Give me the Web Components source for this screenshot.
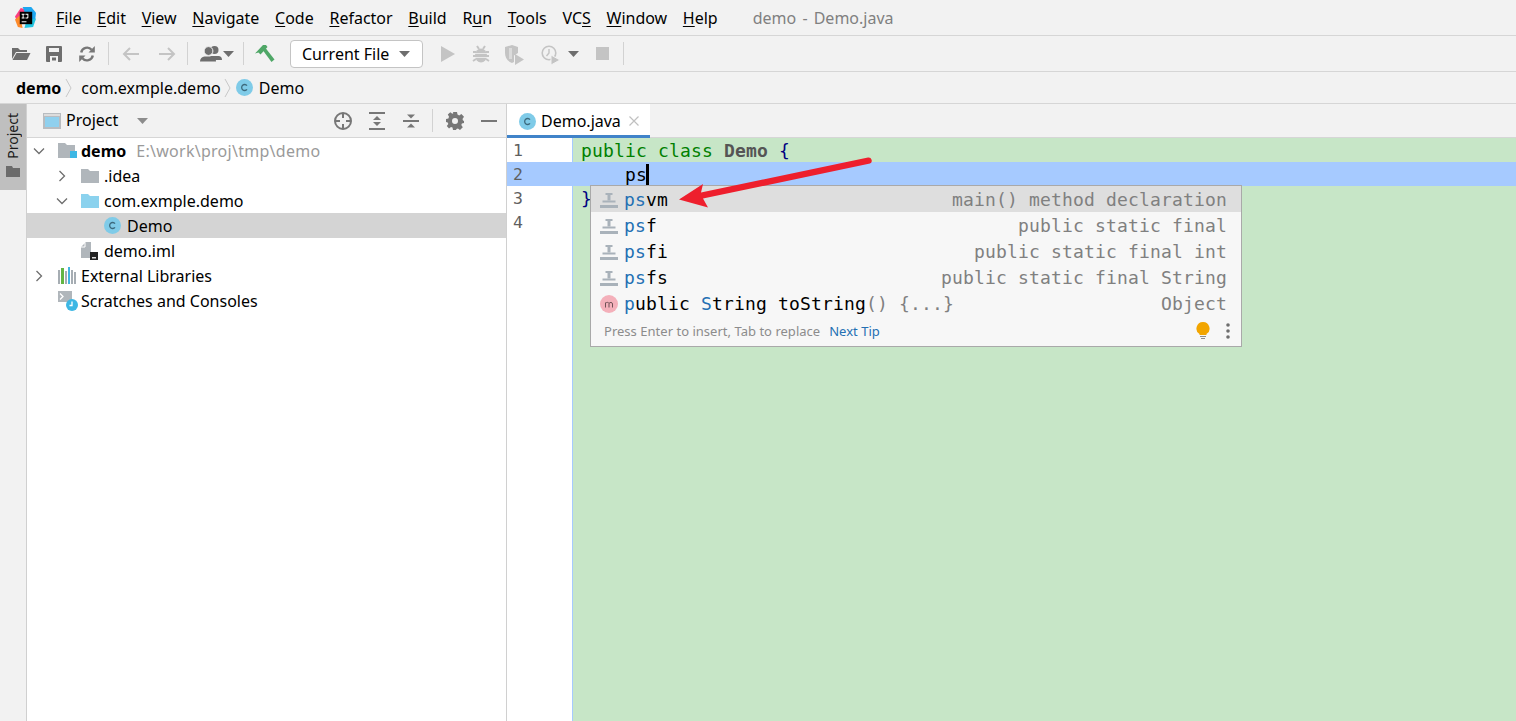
<!DOCTYPE html>
<html lang="en">

<head>
	<meta charset="UTF-8">
	<title>demo - Demo.java</title>
	<style>
		html, body { margin: 0; height: 100%; overflow: hidden; background: #fff; }
		body { font-family: "Noto Sans", "Open Sans", sans-serif; font-size: 16px; color: #000; }
	</style>
</head>

<body>
	<ij-app></ij-app>

	<script>
		// all icons in one place, each one drawn for its own box
		const ICONS = {
			logo: `<svg width="21" height="21" viewBox="0 0 22 22">
				<path d="M0 10 L6 1 L13 3 L9 15 L3 17 Z" fill="#fc3f80"/>
				<path d="M8 0 L17 0 L22 6 L21 15 L12 10 Z" fill="#1ea7f0"/>
				<path d="M0 13 L5 9 L8 22 L3 21 Z" fill="#fd8a2a"/>
				<path d="M12 14 L22 12 L19 21 L10 22 Z" fill="#22c4e0"/>
				<rect x="5" y="5" width="13" height="13" fill="#000"/>
				<path d="M7 7h3v1H9v3h1v1H7v-1h1V8H7zM11 7h3v4c0 1-.6 1-1.5 1H11v-1h1.5c.4 0 .5-.1.5-.4V8h-2z" fill="#fff"/>
				<rect x="7" y="15" width="5" height="1" fill="#fff"/>
			</svg>`,
			open: `<svg width="20" height="16" viewBox="0 0 20 16"><path d="M1 2h6l2 2h7v2H5L1 13z" fill="#6e6e6e"/><path d="M5.500 7H19.500L16 14H1.500z" fill="#6e6e6e"/></svg>`,
			save: `<svg width="16" height="16" viewBox="0 0 16 16"><path fill-rule="evenodd" d="M1 0h14a1 1 0 0 1 1 1v14a1 1 0 0 1-1 1H1a1 1 0 0 1-1-1V1a1 1 0 0 1 1-1zM3 2v4h10V2zM4 10v6h8v-6z" fill="#6e6e6e"/><rect x="6" y="11.500" width="4" height="3" fill="#6e6e6e"/></svg>`,
			sync: `<svg width="18" height="18" viewBox="0 0 18 18" fill="none"><path d="M3.200 7.500A6 6 0 0 1 13.600 4.700" stroke="#777" stroke-width="2.400"/><path d="M10.500 7.400h6.300V1z" fill="#777"/><path d="M14.800 10.500A6 6 0 0 1 4.400 13.300" stroke="#777" stroke-width="2.400"/><path d="M7.500 10.600H1.200V17z" fill="#777"/></svg>`,
			back: `<svg width="18" height="14" viewBox="0 0 18 14" fill="none" stroke="#c4c4c4" stroke-width="2"><path d="M17 7H2M8 1L2 7l6 6"/></svg>`,
			forward: `<svg width="18" height="14" viewBox="0 0 18 14" fill="none" stroke="#c4c4c4" stroke-width="2"><path d="M1 7h15M10 1l6 6-6 6"/></svg>`,
			person: `<svg width="22" height="18" viewBox="0 0 22 18"><circle cx="14.500" cy="5" r="4" fill="#6e6e6e"/><path d="M10 11h9c2 .6 3 1.700 3 4h-8z" fill="#6e6e6e"/><circle cx="8.500" cy="6" r="4.400" fill="#6e6e6e" stroke="#f2f2f2"/><path d="M0 16.500c0-3 2-4.400 4.500-5h8c2.500.6 3.500 2 3.500 5z" fill="#6e6e6e"/></svg>`,
			caret: `<svg width="11" height="6" viewBox="0 0 11 6"><path d="M0 0h11L5.500 6z" fill="#6e6e6e"/></svg>`,
			hammer: `<svg width="20" height="18" viewBox="0 0 20 18"><path d="M0 8.500L8 0h3l1.500 2-7 7.500-2-2z" fill="#4fa767"/><path d="M8 5.500L10.500 3 19.500 14.500 16.500 17z" fill="#4fa767"/></svg>`,
			run: `<svg width="14" height="16" viewBox="0 0 14 16"><path d="M0 0l14 8-14 8z" fill="#c4c4c4"/></svg>`,
			debug: `<svg width="18" height="18" viewBox="0 0 18 18"><g stroke="#c4c4c4" stroke-width="2" fill="none"><path d="M5 1l2 3M13 1l-2 3M1 7h3M17 7h-3M1 11h3M17 11h-3M1 16l3-2M17 16l-3-2"/></g><ellipse cx="9" cy="10.500" rx="6" ry="7" fill="#c4c4c4"/><path d="M3 8.500h12M3 12.500h12" stroke="#f2f2f2" stroke-width=".8"/></svg>`,
			coverage: `<svg width="20" height="20" viewBox="0 0 20 20"><path d="M0 2l7-2 6 2v6l-4 2.500V17l-2 1C2 16 0 12 0 8z" fill="#c4c4c4"/><path d="M4 3h3v11H4z" fill="#f2f2f2" opacity=".5"/><path d="M10 9l9 5.500-9 5.500z" fill="#c4c4c4"/></svg>`,
			profile: `<svg width="20" height="20" viewBox="0 0 20 20"><circle cx="8" cy="8" r="6.800" fill="none" stroke="#c4c4c4" stroke-width="1.600"/><path d="M8 4v4l-2.500 3" fill="none" stroke="#c4c4c4" stroke-width="1.400"/><path d="M10 10l9 5-9 5z" fill="#c4c4c4" stroke="#f2f2f2"/></svg>`,
			stop: `<svg width="13" height="13" viewBox="0 0 13 13"><rect width="13" height="13" fill="#c4c4c4"/></svg>`,
			crumb: `<svg width="7" height="20" viewBox="0 0 7 20" fill="none" stroke="#c8c8c8"><path d="M1 1l5 9-5 9"/></svg>`,
			cls: `<svg width="17" height="17" viewBox="0 0 17 17"><circle cx="8.500" cy="8.500" r="8.500" fill="#7fcbe8"/><path d="M11 6.600A3 3 0 1 0 11 10.400" fill="none" stroke="#3d6a7d" stroke-width="1.300"/></svg>`,
			panel: `<svg width="18" height="16" viewBox="0 0 18 16"><rect width="18" height="16" fill="#b8bcc0"/><rect x="1" y="1" width="16" height="2" fill="#dcdcdc"/><rect x="2" y="4" width="14" height="10" fill="#8fd0ee"/></svg>`,
			down: `<svg width="11" height="6" viewBox="0 0 11 6"><path d="M0 0h11L5.500 6z" fill="#8c8c8c"/></svg>`,
			target: `<svg width="20" height="20" viewBox="0 0 20 20" fill="none" stroke="#777" stroke-width="2"><circle cx="10" cy="10" r="8"/><path d="M10 2v5M10 13v5M2 10h5M13 10h5"/></svg>`,
			expand: `<svg width="16" height="18" viewBox="0 0 16 18"><path d="M0 0h16v2H0zM0 16h16v2H0z" fill="#777"/><path d="M8 4l4 4H4zM8 14l4-4H4z" fill="#777"/></svg>`,
			collapse: `<svg width="16" height="18" viewBox="0 0 16 18"><path d="M0 8h16v2H0z" fill="#777"/><path d="M8 6.500l-4-4h8zM8 11.500l4 4H4z" fill="#777"/></svg>`,
			gear: `<svg width="18" height="18" viewBox="0 0 18 18"><path fill="#777" fill-rule="evenodd" d="M7 0h4l.5 2.600 1.700.8L15.400 2 18 4.800l-1.500 2.100.5 1.500L18 9v2l-2.100.5-.6 1.600 1.500 2.100L14 18l-2.100-1.500-1.400.6L10 18H7l-.5-2.400-1.500-.6L3 16.500.8 14l1.500-2.100-.6-1.500L0 10V7l2.400-.5.6-1.700L1.800 2.500 4.300.3l2 1.400 1-.4zM9 6a3 3 0 1 0 0 6 3 3 0 0 0 0-6z"/></svg>`,
			minimize: `<svg width="16" height="2" viewBox="0 0 16 2"><rect width="16" height="2" fill="#777"/></svg>`,
			chevRight: `<svg width="12" height="12" viewBox="0 0 12 12" fill="none" stroke="#6e6e6e" stroke-width="1.300"><path d="M3.500 1l5 5-5 5"/></svg>`,
			chevDown: `<svg width="12" height="12" viewBox="0 0 12 12" fill="none" stroke="#6e6e6e" stroke-width="1.300"><path d="M1 3.500l5 5 5-5"/></svg>`,
			module: `<svg width="20" height="18" viewBox="0 0 20 18"><path d="M0 1h7l2 2h8v6h-5v7H0z" fill="#b0b6bb"/><rect x="12" y="9" width="7" height="7" fill="#3db7e4"/></svg>`,
			folder: `<svg width="18" height="14" viewBox="0 0 18 14"><path d="M0 0h7l2 2h9v12H0z" fill="#b0b6bb"/></svg>`,
			pkg: `<svg width="18" height="14" viewBox="0 0 18 14"><path d="M0 0h7l2 2h9v12H0z" fill="#8bd2ee"/></svg>`,
			iml: `<svg width="17" height="18" viewBox="0 0 17 18"><path d="M5 0h5v16H0V5z" fill="#b0b6bb"/><path d="M4 1v4H0" fill="none" stroke="#fff"/><rect x="9" y="10" width="8" height="8" fill="#222"/><rect x="11" y="15" width="4" height="1.500" fill="#ddd"/></svg>`,
			libs: `<svg width="18" height="17" viewBox="0 0 18 17"><rect x="0" y="3" width="2" height="14" fill="#a6adb3"/><rect x="3" y="1" width="3" height="16" fill="#62b543"/><rect x="7" y="4" width="2" height="13" fill="#a6adb3"/><rect x="10" y="0" width="2" height="17" fill="#40b6e0"/><rect x="13" y="3" width="2" height="14" fill="#a6adb3"/><rect x="16" y="5" width="2" height="12" fill="#a6adb3"/></svg>`,
			scratches: `<svg width="20" height="20" viewBox="0 0 20 20"><rect x="0" y="0" width="14" height="11" fill="#b0b6bb"/><path d="M2 2.500l3 3-3 3" fill="none" stroke="#fff" stroke-width="1.300"/><circle cx="14" cy="14" r="6" fill="#3db7e4"/><path d="M14 10.500V14.500h-2.500" fill="none" stroke="#fff" stroke-width="1.300"/></svg>`,
			stripeFolder: `<svg width="14" height="11" viewBox="0 0 14 11"><path d="M0 0h6l1 2h7v9H0z" fill="#6b6b6b"/></svg>`,
			close: `<svg width="10" height="10" viewBox="0 0 10 10" fill="none" stroke="#c0c0c0" stroke-width="1.200"><path d="M.5.5l9 9M9.500.5l-9 9"/></svg>`,
			live: `<svg width="18" height="15" viewBox="0 0 18 15"><path d="M5.500 0h7v2h-2v5.500h-3V2h-2z" fill="#a9b2ba"/><rect x="2.500" y="7.500" width="13" height="2" fill="#a9b2ba"/><rect x="0" y="12" width="18" height="3" fill="#a9b2ba"/></svg>`,
			method: `<svg width="18" height="18" viewBox="0 0 18 18"><circle cx="9" cy="9" r="9" fill="#f4b0ba"/><path d="M5.500 12.500V7.500M5.500 8.500c.8-1.500 3.200-1.500 3.500 0v4M9 8.500c.8-1.500 3.500-1.500 3.500.5v3.500" fill="none" stroke="#6f5055" stroke-width="1"/></svg>`,
			bulb: `<svg width="14" height="18" viewBox="0 0 14 18"><path d="M7 0a6.500 6.500 0 0 1 3.500 12v1h-7v-1A6.500 6.500 0 0 1 7 0z" fill="#f2a500"/><rect x="4" y="14" width="6" height="1" fill="#8c8c8c"/><rect x="5" y="16" width="4" height="1" fill="#8c8c8c"/></svg>`,
			dots: `<svg width="4" height="16" viewBox="0 0 4 16"><circle cx="2" cy="2" r="1.800" fill="#6e6e6e"/><circle cx="2" cy="8" r="1.800" fill="#6e6e6e"/><circle cx="2" cy="14" r="1.800" fill="#6e6e6e"/></svg>`
		};

		class IjIcon extends HTMLElement {
			connectedCallback() {
				this.attachShadow({ mode: 'open' });
				this.shadowRoot.innerHTML = `<style>
					:host { display: inline-flex; align-items: center; justify-content: center; flex: none; line-height: 0; }
				</style>${ICONS[this.getAttribute('name')] || ''}`;
			}
		}
		customElements.define('ij-icon', IjIcon);

		// top menu
		class IjMenubar extends HTMLElement {
			connectedCallback() {
				this.attachShadow({ mode: 'open' });
				this.shadowRoot.innerHTML = `<style>
					:host { display: flex; align-items: center; height: 35px; border-bottom: 1px solid #d6d6d6; background: #f2f2f2; padding-left: 15px; }
					.items { display: flex; gap: 15.700px; margin-left: 20px; }
					span { white-space: nowrap; }
					u { text-underline-offset: 2px; }
					.title { margin-left: 35px; color: #808080; word-spacing: 2px; }
				</style>
				<ij-icon name="logo" style="margin-top:-1px"></ij-icon>
				<div class="items">
					<span><u>F</u>ile</span><span><u>E</u>dit</span><span><u>V</u>iew</span><span><u>N</u>avigate</span><span><u>C</u>ode</span><span><u>R</u>efactor</span><span><u>B</u>uild</span><span>R<u>u</u>n</span><span><u>T</u>ools</span><span>VC<u>S</u></span><span><u>W</u>indow</span><span><u>H</u>elp</span>
				</div>
				<span class="title">demo - Demo.java</span>`;
			}
		}
		customElements.define('ij-menubar', IjMenubar);

		class IjToolbar extends HTMLElement {
			connectedCallback() {
				this.attachShadow({ mode: 'open' });
				this.shadowRoot.innerHTML = `<style>
					:host { display: flex; align-items: center; height: 35px; border-bottom: 1px solid #d6d6d6; background: #f2f2f2; padding-left: 11px; }
					.sep { width: 1px; height: 23px; background: #d2d2d2; flex: none; }
					.combo { display: flex; align-items: center; justify-content: space-between; box-sizing: border-box; width: 133px; height: 28px; margin: 0 18px 0 15px; padding: 0 12px 0 11px; background: #fff; border: 1px solid #c4c4c4; border-radius: 4px; }
				</style>
				<ij-icon name="open"></ij-icon>
				<ij-icon name="save" style="margin-left:15px"></ij-icon>
				<ij-icon name="sync" style="margin-left:16px"></ij-icon>
				<div class="sep" style="margin:0 13px 0 12px"></div>
				<ij-icon name="back"></ij-icon>
				<ij-icon name="forward" style="margin-left:18px"></ij-icon>
				<div class="sep" style="margin:0 12px 0 11px"></div>
				<ij-icon name="person"></ij-icon>
				<ij-icon name="caret" style="margin-left:1px"></ij-icon>
				<div class="sep" style="margin:0 11px 0 9px"></div>
				<ij-icon name="hammer"></ij-icon>
				<div class="combo"><span>Current File</span><ij-icon name="caret"></ij-icon></div>
				<ij-icon name="run"></ij-icon>
				<ij-icon name="debug" style="margin-left:17px"></ij-icon>
				<ij-icon name="coverage" style="margin-left:15px;margin-top:2px"></ij-icon>
				<ij-icon name="profile" style="margin-left:16px;margin-top:2px"></ij-icon>
				<ij-icon name="caret" style="margin-left:7px"></ij-icon>
				<ij-icon name="stop" style="margin-left:17px"></ij-icon>
				<div class="sep" style="margin-left:14px"></div>`;
			}
		}
		customElements.define('ij-toolbar', IjToolbar);

		class IjBreadcrumb extends HTMLElement {
			connectedCallback() {
				this.attachShadow({ mode: 'open' });
				this.shadowRoot.innerHTML = `<style>
					:host { display: flex; align-items: center; height: 31px; border-bottom: 1px solid #d6d6d6; background: #f2f2f2; padding-left: 16px; }
					b { font-weight: 700; }
				</style>
				<b>demo</b>
				<ij-icon name="crumb" style="margin:0 9px 0 4px"></ij-icon>
				<span>com.exmple.demo</span>
				<ij-icon name="crumb" style="margin:0 5px 0 3px"></ij-icon>
				<ij-icon name="cls" style="margin-right:6px"></ij-icon>
				<span>Demo</span>`;
			}
		}
		customElements.define('ij-breadcrumb', IjBreadcrumb);

		class IjStripe extends HTMLElement {
			connectedCallback() {
				this.attachShadow({ mode: 'open' });
				this.shadowRoot.innerHTML = `<style>
					:host { display: block; flex: none; width: 26px; background: #f2f2f2; border-right: 1px solid #d0d0d0; }
					.btn { display: flex; flex-direction: column; align-items: center; gap: 7px; height: 86px; padding-top: 9px; box-sizing: border-box; background: #bfbfbf; }
					.label { writing-mode: vertical-rl; transform: rotate(180deg); font-size: 14px; line-height: 14px; color: #1a1a1a; }
				</style>
				<div class="btn"><span class="label">Project</span><ij-icon name="stripeFolder"></ij-icon></div>`;
			}
		}
		customElements.define('ij-stripe', IjStripe);

		// one line of the project tree, indent by level, chevron optional
		class IjTreeRow extends HTMLElement {
			connectedCallback() {
				const level = +this.getAttribute('level') || 0;
				const chev = this.getAttribute('chevron');
				this.attachShadow({ mode: 'open' });
				this.shadowRoot.innerHTML = `<style>
					:host { display: flex; align-items: center; height: 25px; padding-left: ${6 + level * 23}px; white-space: nowrap; }
					:host([selected]) { background: #d4d4d4; }
					.chev { width: 25px; display: flex; flex: none; }
					.icon { width: 23px; display: flex; flex: none; }
				</style>
				<div class="chev">${chev ? `<ij-icon name="${chev}"></ij-icon>` : ''}</div>
				<div class="icon"><ij-icon name="${this.getAttribute('icon')}"></ij-icon></div>
				<div><slot></slot></div>`;
			}
		}
		customElements.define('ij-tree-row', IjTreeRow);

		class IjProject extends HTMLElement {
			connectedCallback() {
				this.attachShadow({ mode: 'open' });
				this.shadowRoot.innerHTML = `<style>
					:host { display: flex; flex-direction: column; flex: none; width: 479px; border-right: 1px solid #d0d0d0; background: #fff; }
					header { display: flex; align-items: center; height: 33px; border-bottom: 1px solid #d6d6d6; background: #f2f2f2; padding-left: 16px; }
					.sep { width: 1px; height: 23px; background: #d2d2d2; }
					.name { margin: -2px 0 0 5px; }
					.tools { display: flex; align-items: center; margin-left: auto; padding-right: 9px; }
				</style>
				<header>
					<ij-icon name="panel"></ij-icon>
					<span class="name">Project</span>
					<ij-icon name="down" style="margin-left:19px"></ij-icon>
					<div class="tools">
						<ij-icon name="target"></ij-icon>
						<ij-icon name="expand" style="margin-left:16px"></ij-icon>
						<ij-icon name="collapse" style="margin-left:18px"></ij-icon>
						<div class="sep" style="margin:0 13px"></div>
						<ij-icon name="gear"></ij-icon>
						<ij-icon name="minimize" style="margin-left:17px"></ij-icon>
					</div>
				</header>
				<slot></slot>`;
			}
		}
		customElements.define('ij-project', IjProject);

		// completion popup lies over the editor
		class IjCompletionRow extends HTMLElement {
			connectedCallback() {
				this.attachShadow({ mode: 'open' });
				this.shadowRoot.innerHTML = `<style>
					:host { display: flex; align-items: center; box-sizing: border-box; height: 26px; padding: 2px 14px 0 9px; }
					:host([active]) { background: #dedede; }
					.icon { width: 24px; display: flex; flex: none; }
					.text { flex: none; white-space: pre; }
					.hint { flex: 1; min-width: 0; text-align: right; color: #808080; white-space: pre; }
				</style>
				<div class="icon"><ij-icon name="${this.getAttribute('icon')}"></ij-icon></div>
				<div class="text"><slot></slot></div>
				<div class="hint">${this.getAttribute('hint')}</div>`;
			}
		}
		customElements.define('ij-completion-row', IjCompletionRow);

		class IjCompletion extends HTMLElement {
			connectedCallback() {
				this.attachShadow({ mode: 'open' });
				this.shadowRoot.innerHTML = `<style>
					:host { display: block; position: absolute; left: 83px; top: 47px; width: 652px; box-sizing: border-box; border: 1px solid #a9a9a9; background: #f7f7f7; font: 18px/24px "DejaVu Sans Mono", "Liberation Mono", monospace; letter-spacing: .16px; }
					footer { display: flex; align-items: center; height: 30px; padding: 0 11px 0 13px; font: 13px "Noto Sans", "Open Sans", sans-serif; letter-spacing: .02px; color: #8c8c8c; }
					a { color: #2470b3; margin-left: 9px; }
					.end { display: flex; align-items: center; gap: 16px; margin-left: auto; }
				</style>
				<slot></slot>
				<footer>
					<span>Press Enter to insert, Tab to replace</span><a>Next Tip</a>
					<div class="end"><ij-icon name="bulb"></ij-icon><ij-icon name="dots"></ij-icon></div>
				</footer>`;
			}
		}
		customElements.define('ij-completion', IjCompletion);

		class IjEditor extends HTMLElement {
			connectedCallback() {
				this.attachShadow({ mode: 'open' });
				this.shadowRoot.innerHTML = `<style>
					:host { display: flex; flex-direction: column; flex: 1; min-width: 0; background: #fff; }
					.tabs { display: flex; height: 34px; box-sizing: border-box; background: #f2f2f2; border-bottom: 1px solid #d6d6d6; flex: none; }
					.tab { display: flex; align-items: center; box-sizing: border-box; width: 143px; height: 34px; padding: 3px 0 0 12px; background: #fff; border-bottom: 3px solid #4083c9; }
					.tab span { margin: 0 8px 0 5px; }
					.body { position: relative; flex: 1; background: linear-gradient(to right, #fff 65px, #a6caff 65px 66px, #c7e6c7 66px); font: 18px/26px "DejaVu Sans Mono", "Liberation Mono", monospace; letter-spacing: .16px; }
					.line { display: flex; height: 24px; }
					.line.current { background: #a6caff; }
					.num { flex: none; width: 66px; box-sizing: border-box; padding-left: 6px; color: #5f5f5f; font-size: 16.500px; letter-spacing: 0; }
					.src { padding-left: 8px; white-space: pre; }
					.caret { display: inline-block; width: 3px; height: 22px; background: #000; vertical-align: top; margin: 2px 0 0 -1px; }
					.kw { color: #008000; }
					.name { color: #555; font-weight: 700; }
					.brace { color: #000080; }
				</style>
				<div class="tabs">
					<div class="tab"><ij-icon name="cls"></ij-icon><span>Demo.java</span><ij-icon name="close"></ij-icon></div>
				</div>
				<div class="body">
					<div class="line"><div class="num">1</div><div class="src"><span class="kw">public class</span> <span class="name">Demo</span> <span class="brace">{</span></div></div>
					<div class="line current"><div class="num">2</div><div class="src">    ps<span class="caret"></span></div></div>
					<div class="line"><div class="num">3</div><div class="src"><span class="brace">}</span></div></div>
					<div class="line"><div class="num">4</div><div class="src"></div></div>
					<slot></slot>
				</div>`;
			}
		}
		customElements.define('ij-editor', IjEditor);

		class IjArrow extends HTMLElement {
			connectedCallback() {
				this.attachShadow({ mode: 'open' });
				this.shadowRoot.innerHTML = `<style>
					:host { display: block; position: absolute; left: 0; top: 0; line-height: 0; pointer-events: none; }
				</style>
				<svg width="1009" height="300" viewBox="507 138 1009 300">
					<path d="M679 199.500 L703 184 L701 192.500 L868 157.500 A3.200 3.200 0 0 1 870 163.500 L703 198.500 L708 207.500 Z" fill="#ee1f2d"/>
				</svg>`;
			}
		}
		customElements.define('ij-arrow', IjArrow);

		class IjApp extends HTMLElement {
			connectedCallback() {
				this.attachShadow({ mode: 'open' });
				this.shadowRoot.innerHTML = `<style>
					:host { display: flex; flex-direction: column; height: 721px; overflow: hidden; }
					.main { flex: 1; display: flex; min-height: 0; }
					.bold { font-weight: 700; }
					.path { color: #9a9a9a; margin-left: 10px; letter-spacing: .27px; }
					.m { color: #2470b3; }
					.g { color: #808080; }
				</style>
				<ij-menubar></ij-menubar>
				<ij-toolbar></ij-toolbar>
				<ij-breadcrumb></ij-breadcrumb>
				<div class="main">
					<ij-stripe></ij-stripe>
					<ij-project>
						<ij-tree-row chevron="chevDown" icon="module"><span class="bold">demo</span><span class="path">E:\\work\\proj\\tmp\\demo</span></ij-tree-row>
						<ij-tree-row level="1" chevron="chevRight" icon="folder">.idea</ij-tree-row>
						<ij-tree-row level="1" chevron="chevDown" icon="pkg">com.exmple.demo</ij-tree-row>
						<ij-tree-row level="2" icon="cls" selected>Demo</ij-tree-row>
						<ij-tree-row level="1" icon="iml">demo.iml</ij-tree-row>
						<ij-tree-row chevron="chevRight" icon="libs">External Libraries</ij-tree-row>
						<ij-tree-row icon="scratches">Scratches and Consoles</ij-tree-row>
					</ij-project>
					<ij-editor>
						<ij-completion>
							<ij-completion-row active icon="live" hint="main() method declaration"><span class="m">ps</span>vm</ij-completion-row>
							<ij-completion-row icon="live" hint="public static final"><span class="m">ps</span>f</ij-completion-row>
							<ij-completion-row icon="live" hint="public static final int"><span class="m">ps</span>fi</ij-completion-row>
							<ij-completion-row icon="live" hint="public static final String"><span class="m">ps</span>fs</ij-completion-row>
							<ij-completion-row icon="method" hint="Object"><span class="m">p</span>ublic <span class="m">S</span>tring toString<span class="g">() {...}</span></ij-completion-row>
						</ij-completion>
						<ij-arrow></ij-arrow>
					</ij-editor>
				</div>`;
			}
		}
		customElements.define('ij-app', IjApp);
	</script>
</body>

</html>
